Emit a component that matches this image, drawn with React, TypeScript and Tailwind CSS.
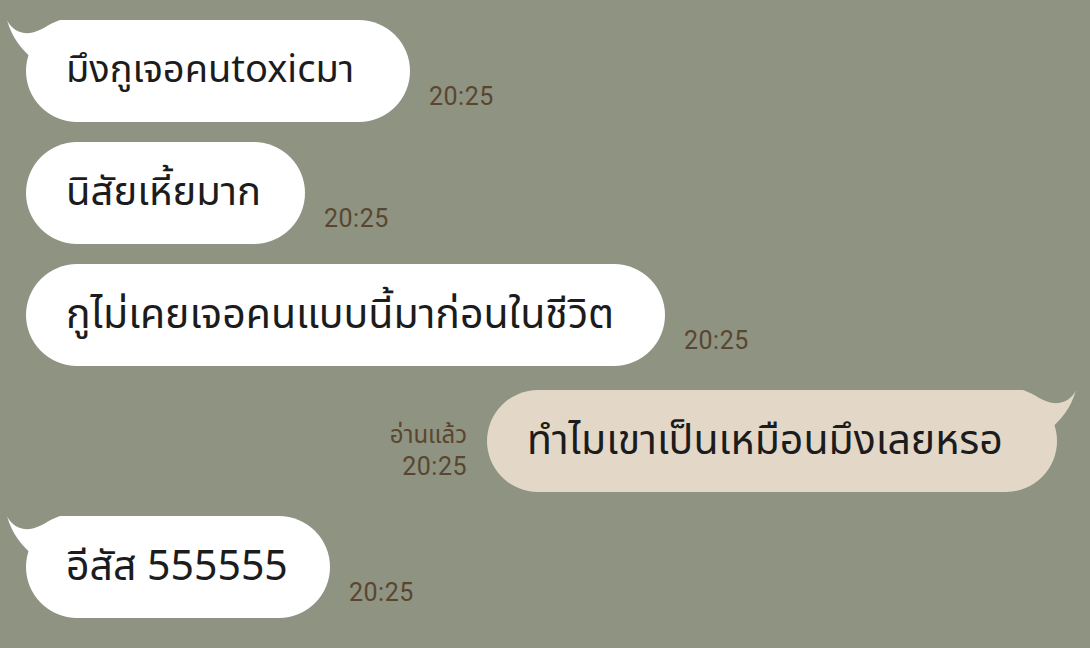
import React from "react"

const font = { fontFamily: '"Noto Sans Thai", "Noto Sans", "DejaVu Sans", sans-serif' }
const timeFont = { fontFamily: 'Roboto, "Noto Sans Thai", "Noto Sans", sans-serif' }

// หางของบับเบิล (ซ้าย, กลับด้านสำหรับขวา)
function Tail({ color, right }: { color: string; right?: boolean }) {
  return (
    <svg
      className={right ? "absolute -right-[26px] -top-[6px] -scale-x-100" : "absolute -left-[26px] -top-[6px]"}
      width="80"
      height="50"
      viewBox="0 0 80 50"
    >
      <path d="M7 6 C11 15 20 20 30 19 C40 18 48 10 60 6 L80 6 L80 50 L34 46 C22 36 12 24 7 6 Z" fill={color} />
    </svg>
  )
}

function Received({ text, w, size, tail }: { text: string; w: string; size: string; tail?: boolean }) {
  return (
    <div className="flex items-end">
      <div className={`relative ml-[26px] flex h-[102px] items-center rounded-full bg-white pl-10 ${w}`}>
        {tail && <Tail color="#ffffff" />}
        <span className={`relative whitespace-nowrap leading-none text-[#1c1c1c] ${size}`}>{text}</span>
      </div>
      <span className="mb-[13px] ml-[19px] text-[25px] leading-none tracking-[0.5px] text-[#5a4630]" style={timeFont}>
        20:25
      </span>
    </div>
  )
}

export default function App() {
  return (
    <div className="h-[648px] w-[1090px] overflow-hidden bg-[#8e9382] pt-[20px]" style={font}>
      <div className="flex flex-col gap-[20px]">
        <Received text="มึงกูเจอคนtoxicมา" w="w-[384px]" size="text-[38px]" tail />
        <Received text="นิสัยเหี้ยมาก" w="w-[279px]" size="text-[40px]" />
        <Received text="กูไม่เคยเจอคนแบบนี้มาก่อนในชีวิต" w="w-[639px]" size="text-[41px]" />
        <div className="my-[4px] flex items-end justify-end pr-[33px]">
          <div className="mb-[13px] mr-[20px] flex flex-col items-end gap-[6px] text-[#5a4630]">
            <span className="text-[24px] leading-none">อ่านแล้ว</span>
            <span className="text-[25px] leading-none tracking-[0.5px]" style={timeFont}>
              20:25
            </span>
          </div>
          <div className="relative flex h-[102px] w-[570px] items-center rounded-full bg-[#e3d8c8] pl-10">
            <Tail color="#e3d8c8" right />
            <span className="relative whitespace-nowrap text-[41px] leading-none text-[#1c1c1c]">
              ทำไมเขาเป็นเหมือนมึงเลยหรอ
            </span>
          </div>
        </div>
        <Received text="อีสัส 555555" w="w-[304px]" size="text-[41px]" tail />
      </div>
    </div>
  )
}
